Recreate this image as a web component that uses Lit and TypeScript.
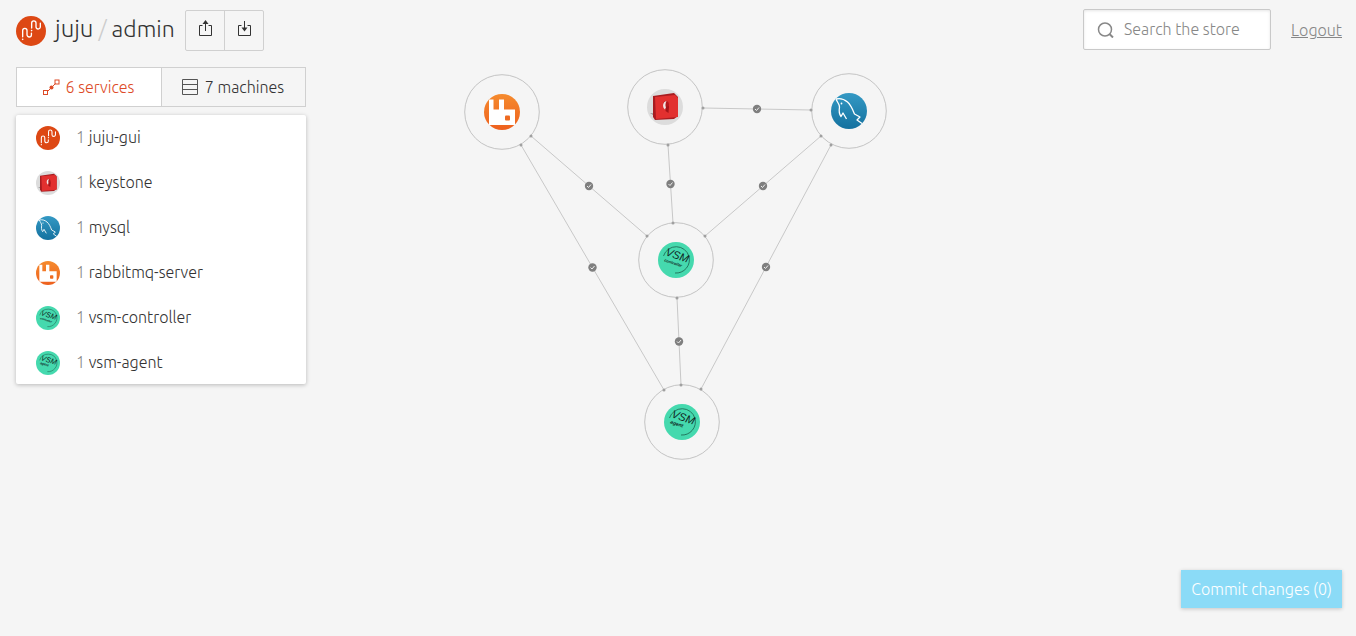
import { LitElement, html, svg, css } from "lit";
import { customElement, state } from "lit/decorators.js";

type Icon = "juju" | "keystone" | "mysql" | "rabbit" | "vsm-controller" | "vsm-agent";

interface Service {
  name: string;
  units: number;
  icon: Icon;
}

interface CanvasNode {
  icon: Icon;
  x: number;
  y: number;
}

interface Relation {
  from: [number, number];
  to: [number, number];
}

const SERVICES: Service[] = [
  { name: "juju-gui", units: 1, icon: "juju" },
  { name: "keystone", units: 1, icon: "keystone" },
  { name: "mysql", units: 1, icon: "mysql" },
  { name: "rabbitmq-server", units: 1, icon: "rabbit" },
  { name: "vsm-controller", units: 1, icon: "vsm-controller" },
  { name: "vsm-agent", units: 1, icon: "vsm-agent" },
];

const NODES: CanvasNode[] = [
  { icon: "rabbit", x: 502, y: 112 },
  { icon: "keystone", x: 665, y: 107 },
  { icon: "mysql", x: 849, y: 111 },
  { icon: "vsm-controller", x: 676, y: 260 },
  { icon: "vsm-agent", x: 682, y: 422 },
];

const RELATIONS: Relation[] = [
  { from: [531, 136], to: [647, 236] },
  { from: [521, 145], to: [664, 390] },
  { from: [703, 108], to: [811, 110] },
  { from: [668, 145], to: [673, 223] },
  { from: [821, 136], to: [705, 236] },
  { from: [831, 145], to: [701, 389] },
  { from: [677, 298], to: [681, 385] },
];

/* All service icons are drawn on a 36 x 36 grid. */
const vsm = (label: string, size: number) => svg`
  <circle cx="18" cy="18" r="18" fill="#45d9ae"></circle>
  <path d="M5.500 14A13.300 13.300 0 0 1 31 14.500A13.300 13.300 0 0 1 17 31" fill="none" stroke="#1c5f4b" stroke-width=".8"></path>
  <g transform="rotate(18 18 18)" font-family="Liberation Sans, sans-serif" font-style="italic" fill="#10261f">
    <text x="6" y="17" font-size="11">VSM</text>
    <text x="7" y="23" font-size=${size} font-weight="700">${label}</text>
  </g>`;

const iconArt = (icon: Icon) => {
  switch (icon) {
    case "juju":
      return svg`
        <circle cx="18" cy="18" r="18" fill="#dd4814"></circle>
        <g fill="none" stroke="#fff" stroke-width="1.600" stroke-linecap="round">
          <path d="M8 25V17.500A2.600 2.600 0 0 1 13.200 17.500V22.500A2.650 2.650 0 0 0 18.500 22.500V20.500"></path>
          <path d="M18.800 14.500V8.500A2.600 2.600 0 0 1 24 8.500V13A2.600 2.600 0 0 0 29.200 13V8.500"></path>
        </g>
        <circle cx="8" cy="28" r="1" fill="#fff"></circle>
        <circle cx="18.700" cy="17.500" r="1" fill="#fff"></circle>`;
    case "keystone":
      return svg`
        <circle cx="18" cy="18" r="18" fill="#dcdcdc"></circle>
        <path d="M3 24L8 25V27Z" fill="#777"></path>
        <path d="M6 7L27 4L31 8L31 27L27 30L8 31L6 28Z" fill="#a81c20"></path>
        <path d="M8 8L28 6L31 9L31 28L9 30Z" fill="#e2302f"></path>
        <ellipse cx="19" cy="16" rx="3" ry="4" fill="#b3191d"></ellipse>
        <path d="M19.500 12C15.500 12.500 15 18.500 18 20.500L19 18.500C18 16.500 18.500 14 19.500 12Z" fill="#f3e3e2"></path>
        <path d="M19 18L22 17L21.500 24L18.500 22Z" fill="#a31519"></path>`;
    case "mysql":
      return svg`
        <defs>
          <linearGradient id="sea" x1="0" y1="0" x2="0" y2="1">
            <stop offset="0" stop-color="#3499c4"></stop>
            <stop offset="1" stop-color="#14719f"></stop>
          </linearGradient>
        </defs>
        <circle cx="18" cy="18" r="18" fill="url(#sea)"></circle>
        <path d="M5 6C9 5 13 6 16.500 9C20 12 21.500 16 23.500 21L29 24L26 27L31 30.500M5 6C6 9 8.500 11 8.500 14C8 17 8 21 10 23.500L12 20L15.500 26" fill="none" stroke="#fff" stroke-width="1.300" stroke-linejoin="round"></path>
        <circle cx="10.500" cy="10.500" r=".9" fill="#fff"></circle>`;
    case "rabbit":
      return svg`
        <defs>
          <linearGradient id="carrot" x1="0" y1="0" x2="0" y2="1">
            <stop offset="0" stop-color="#f58b2e"></stop>
            <stop offset="1" stop-color="#ee5f1d"></stop>
          </linearGradient>
        </defs>
        <circle cx="18" cy="18" r="18" fill="url(#carrot)"></circle>
        <path d="M5 5.500H9.500V15.500H15V5.500H20V15.500H31V31H5Z" fill="#fff"></path>
        <rect x="21" y="21.500" width="5" height="5" rx="1" fill="#ee6a20"></rect>`;
    case "vsm-controller":
      return vsm("controller", 4);
    case "vsm-agent":
      return vsm("agent", 5);
  }
};

@customElement("service-icon")
export class ServiceIcon extends LitElement {
  static properties = { icon: { type: String } };
  declare icon: Icon;

  static styles = css`
    :host {
      display: block;
    }
    .art {
      display: block;
      width: 100%;
      height: auto;
    }
  `;

  render() {
    return html`<svg class="art" viewBox="0 0 36 36" aria-hidden="true">${iconArt(this.icon)}</svg>`;
  }
}

@customElement("app-root")
export class AppRoot extends LitElement {
  @state() private tab: "services" | "machines" = "services";

  static styles = css`
    :host {
      display: block;
      position: relative;
      min-height: 100vh;
      box-sizing: border-box;
      background: #f5f5f5;
      color: #333;
      font: 300 16px/24px Ubuntu, "Noto Sans", sans-serif;
    }
    * {
      box-sizing: border-box;
    }
    button,
    input {
      font: inherit;
      color: inherit;
      margin: 0;
    }
    .canvas {
      position: absolute;
      inset: 0;
      width: 100%;
      height: 100%;
    }
    .ring {
      fill: #f5f5f5;
      stroke: #c4c4c4;
    }
    .line {
      stroke: #c8c8c8;
    }
    .end {
      fill: #a0a0a0;
    }
    .badge {
      fill: #7f7f7f;
    }
    .tick {
      fill: none;
      stroke: #eee;
      stroke-width: 1;
    }
    .page {
      position: relative;
      display: flex;
      flex-direction: column;
      min-height: 100vh;
      padding: 9px 14px 28px 16px;
      pointer-events: none;
    }
    .page a,
    .page button,
    .page input,
    .list {
      pointer-events: auto;
    }
    .header {
      display: flex;
      align-items: center;
      height: 42px;
    }
    .crumbs {
      display: flex;
      align-items: center;
      font-size: 23px;
      line-height: 38px;
      margin: 0;
      padding-bottom: 2px;
      font-weight: 300;
    }
    .home {
      display: flex;
      align-items: center;
      gap: 9px;
      color: inherit;
      text-decoration: none;
    }
    .logo {
      width: 30px;
      padding-top: 4px;
    }
    .word {
      font-size: 24px;
    }
    .slash {
      margin: 0 5px;
      color: #ccc;
    }
    .tools {
      display: flex;
      align-self: flex-end;
      margin-left: 10px;
      border: 1px solid #d0d0d0;
      border-radius: 2px;
    }
    .tool {
      display: grid;
      place-items: center;
      width: 38px;
      height: 39px;
      padding: 0 0 4px 2px;
      border: 0;
      background: none;
    }
    .tool + .tool {
      width: 39px;
      border-left: 1px solid #d0d0d0;
    }
    .search {
      display: flex;
      align-items: center;
      align-self: flex-start;
      gap: 10px;
      width: 188px;
      height: 41px;
      margin-left: auto;
      padding: 0 13px;
      border: 1px solid #c9c9c9;
      border-radius: 2px;
      background: #fff;
      box-shadow: inset 0 1px 3px #0000001a;
      color: #888;
    }
    .field {
      flex: 1;
      min-width: 0;
      padding: 0 0 2px;
      border: 0;
      outline: 0;
      background: none;
    }
    .field::placeholder {
      color: #878787;
      opacity: 1;
    }
    .logout {
      margin-left: 20px;
      color: #878787;
    }
    .panel {
      width: 290px;
      margin-top: 16px;
    }
    .tabs {
      display: grid;
      grid-template-columns: 1fr 1fr;
      border: 1px solid #d0d0d0;
    }
    .tab {
      display: flex;
      align-items: center;
      justify-content: center;
      gap: 6px;
      height: 38px;
      padding: 0 1px 0 0;
      border: 0;
      background: none;
    }
    .tab + .tab {
      border-left: 1px solid #d0d0d0;
    }
    .tab.active {
      background: #fff;
      color: #dd4b27;
    }
    .list {
      display: grid;
      gap: 1px;
      margin: 8px 0 0;
      padding: 0;
      list-style: none;
      background: #fff;
      border-radius: 2px;
      box-shadow: 0 1px 4px #00000040;
    }
    .row {
      display: flex;
      align-items: center;
      gap: 16px;
      height: 44px;
      padding: 0 20px;
    }
    .row-icon {
      width: 24px;
      padding-top: 1px;
    }
    .units {
      color: #888;
    }
    .footer {
      display: flex;
      justify-content: flex-end;
      margin-top: auto;
    }
    .commit {
      height: 38px;
      padding: 0 10px;
      border: 0;
      background: #8bdbf7;
      color: #fff;
      box-shadow: 0 1px 4px #00000033;
    }
  `;

  private relation(r: Relation) {
    const [x1, y1] = r.from;
    const [x2, y2] = r.to;
    const cx = (x1 + x2) / 2;
    const cy = (y1 + y2) / 2;
    return svg`
      <line class="line" x1=${x1} y1=${y1} x2=${x2} y2=${y2}></line>
      <circle class="end" cx=${x1} cy=${y1} r="1.500"></circle>
      <circle class="end" cx=${x2} cy=${y2} r="1.500"></circle>
      <g transform="translate(${cx} ${cy})">
        <circle class="badge" r="4.200"></circle>
        <path class="tick" d="M-2 0L-.5 1.500L2 -1.500"></path>
      </g>`;
  }

  private node(n: CanvasNode) {
    return svg`
      <g transform="translate(${n.x} ${n.y})">
        <circle class="ring" r="37.300"></circle>
        <g transform="translate(-18 -18)">${iconArt(n.icon)}</g>
      </g>`;
  }

  render() {
    return html`
      <svg class="canvas" role="img" aria-label="Service relations">
        ${NODES.map((n) => this.node(n))} ${RELATIONS.map((r) => this.relation(r))}
      </svg>
      <div class="page">
        <header class="header">
          <h1 class="crumbs">
            <a class="home" href="#">
              <service-icon class="logo" .icon=${"juju"}></service-icon>
              <span class="word">juju</span>
            </a>
            <span class="slash">/</span>
            <span>admin</span>
          </h1>
          <div class="tools">
            <button class="tool" type="button" aria-label="Export">
              <svg width="15" height="17" viewBox="0 0 15 17" fill="none" stroke="#333">
                <path d="M4.500 5.500H1.500V15.500H13.500V5.500H10.500M7.500 11V2"></path>
                <path d="M7.500 0L10.500 4H4.500Z" fill="#333" stroke="none"></path>
              </svg>
            </button>
            <button class="tool" type="button" aria-label="Import">
              <svg width="15" height="17" viewBox="0 0 15 17" fill="none" stroke="#333">
                <path d="M4.500 5.500H1.500V15.500H13.500V5.500H10.500M7.500 1V9"></path>
                <path d="M7.500 11.500L10.500 7.500H4.500Z" fill="#333" stroke="none"></path>
              </svg>
            </button>
          </div>
          <label class="search">
            <svg width="17" height="17" viewBox="0 0 17 17" fill="none" stroke="#888" stroke-width="1.500">
              <circle cx="8" cy="8.500" r="6.500"></circle>
              <path d="M12.500 13L16 16.500" stroke-width="2"></path>
            </svg>
            <input class="field" type="text" placeholder="Search the store" aria-label="Search the store" />
          </label>
          <a class="logout" href="#">Logout</a>
        </header>
        <section class="panel">
          <div class="tabs">
            <button
              class="tab ${this.tab === "services" ? "active" : ""}"
              type="button"
              @click=${() => (this.tab = "services")}
            >
              <svg width="17" height="17" viewBox="0 0 17 17" fill="none" stroke="#dd4b27">
                <path d="M4.500 12.500L12.500 4.500"></path>
                <rect x=".5" y="11.500" width="4" height="4"></rect>
                <rect x="12" y="1" width="4" height="4"></rect>
                <circle cx="8.500" cy="8.500" r="2" fill="#dd4b27" stroke="none"></circle>
              </svg>
              6 services
            </button>
            <button
              class="tab ${this.tab === "machines" ? "active" : ""}"
              type="button"
              @click=${() => (this.tab = "machines")}
            >
              <svg width="17" height="17" viewBox="0 0 17 17" fill="none" stroke="#555">
                <path d="M.5 .5H15.500V15.500H.5ZM.5 5.500H15.500M.5 10.500H15.500"></path>
              </svg>
              7 machines
            </button>
          </div>
          <ul class="list">
            ${SERVICES.map(
              (s) => html`<li class="row">
                <service-icon class="row-icon" .icon=${s.icon}></service-icon>
                <span><span class="units">${s.units}</span> ${s.name}</span>
              </li>`
            )}
          </ul>
        </section>
        <footer class="footer">
          <button class="commit" type="button">Commit changes (0)</button>
        </footer>
      </div>
    `;
  }
}
